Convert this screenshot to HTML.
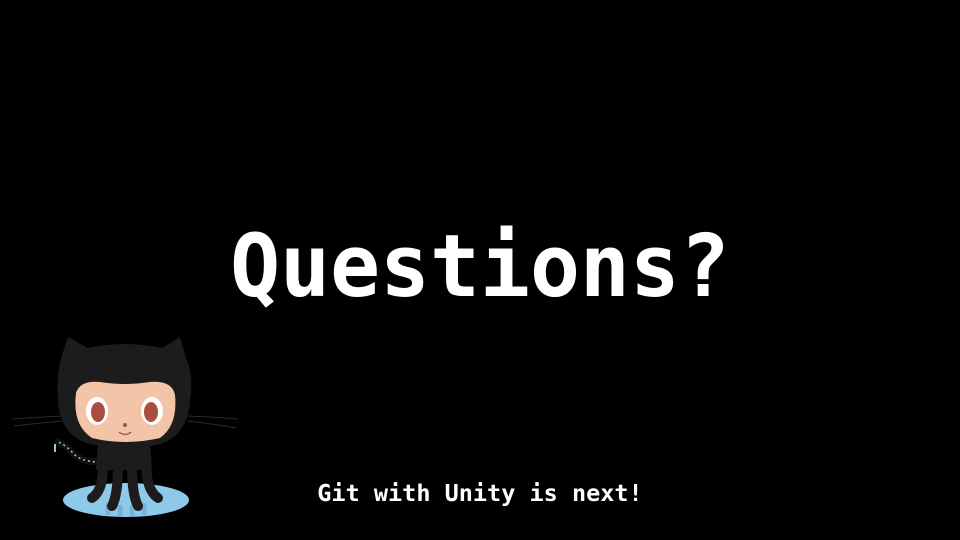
<!DOCTYPE html>
<html><head><style>
html,body{margin:0;padding:0;background:#000;width:960px;height:540px;overflow:hidden;position:relative}
.t{position:absolute;left:0;width:960px;text-align:center;color:#fff;font-family:"DejaVu Sans Mono","Liberation Mono",monospace;font-weight:bold;white-space:nowrap}
#q{top:217px;font-size:83px;line-height:100px;transform:scaleY(1.04);transform-origin:center}
#n{top:479px;font-size:23.5px;line-height:28px;transform:scaleY(1.0)}
</style></head><body>
<div class="t" id="q">Questions?</div>
<div class="t" id="n">Git with Unity is next!</div>
<svg width="250" height="210" style="position:absolute;left:0;top:330px" viewBox="0 330 250 210">
<ellipse cx="126" cy="500" rx="63" ry="17" fill="#8fc9ea"/>
<g stroke="#6aa9d6" stroke-width="5" opacity="0.7">
<path d="M108 503 v12"/><path d="M120 505 v12"/><path d="M132 505 v12"/><path d="M144 503 v12"/>
</g>
<g stroke="#2a2a2a" stroke-width="1" fill="none">
<path d="M12 419 Q40 417 62 416"/><path d="M14 426 Q40 423 62 421"/>
<path d="M188 416 Q215 417 238 419"/><path d="M188 421 Q215 424 236 428"/>
</g>
<path d="M100 462 Q80 462 72 452 Q64 444 58 442" stroke="#111" stroke-width="7" fill="none" stroke-linecap="round"/>
<path d="M100 462 Q80 462 72 452 Q64 444 58 442" stroke="#8fc9ea" stroke-width="1.5" stroke-dasharray="2 3" fill="none"/>
<path d="M55 444 l0 8" stroke="#8fc9ea" stroke-width="2"/>
<path d="M98 443 L150 443 L152 470 L96 470 Z" fill="#1c1c1c"/>
<g stroke="#1c1c1c" stroke-width="10" fill="none" stroke-linecap="round">
<path d="M103 462 Q104 490 92 498"/>
<path d="M118 465 Q118 495 112 506"/>
<path d="M132 465 Q132 495 138 506"/>
<path d="M146 462 Q146 490 158 498"/>
</g>
<path d="M62 355 L68 337 L88 348 Q125 340 162 348 L180 337 L186 358 Q194 375 190 400 Q188 435 160 444 Q125 452 90 444 Q60 436 58 400 Q56 375 62 355 Z" fill="#1c1c1c"/>
<path d="M76 393 Q80 380 100 382 Q125 386 150 382 Q172 380 175 395 Q178 425 160 438 Q125 446 92 438 Q72 425 76 393 Z" fill="#f3c4a8"/>
<ellipse cx="97" cy="411" rx="11" ry="14" fill="#fff"/><ellipse cx="98" cy="412" rx="7" ry="10" fill="#a94f3f"/>
<ellipse cx="152" cy="411" rx="11" ry="14" fill="#fff"/><ellipse cx="151" cy="412" rx="7" ry="10" fill="#a94f3f"/>
<circle cx="125" cy="425" r="2" fill="#a94f3f"/>
<path d="M119 432 Q125 437 131 432" stroke="#a94f3f" stroke-width="1.3" fill="none"/>
</svg>
</body></html>
